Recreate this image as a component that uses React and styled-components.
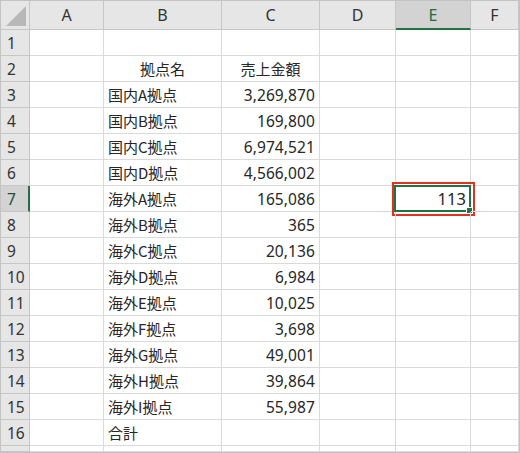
import React from "react";
import styled, { createGlobalStyle } from "styled-components";

const GlobalStyle = createGlobalStyle`
  html, body {
    margin: 0;
    padding: 0;
    background: #ffffff;
  }
`;

const Sheet = styled.div`
  position: relative;
  width: 520px;
  height: 453px;
  box-sizing: border-box;
  border: 1px solid #c3c3c3;
  overflow: hidden;
  display: grid;
  grid-template-columns: 29px 74px 118px 98px 76px 75px 1fr;
  grid-template-rows: 29px repeat(16, 26px) 1fr;
  font-family: "Noto Sans CJK JP", "Noto Sans", sans-serif;
  color: #262626;
  background: #ffffff;
`;

const Corner = styled.div`
  position: relative;
  background: #e6e6e6;
  border-right: 1px solid #c6c6c6;
  border-bottom: 1px solid #c6c6c6;
  box-sizing: border-box;
  &::after {
    content: "";
    position: absolute;
    right: 3px;
    bottom: 3px;
    width: 0;
    height: 0;
    border-left: 20px solid transparent;
    border-bottom: 20px solid #b8b8b8;
  }
`;

const ColHead = styled.div`
  display: flex;
  align-items: center;
  justify-content: center;
  box-sizing: border-box;
  background: ${(p) => (p.$active ? "#d3d3d3" : "#e6e6e6")};
  border-right: 1px solid #c6c6c6;
  border-bottom: ${(p) => (p.$active ? "2px solid #217346" : "1px solid #c6c6c6")};
  color: ${(p) => (p.$active ? "#1e6b40" : "#333")};
  font-family: "Noto Sans", "Liberation Sans", sans-serif;
  font-size: 16px;
  padding-top: ${(p) => (p.$active ? "1px" : "0")};
`;

const RowHead = styled.div`
  display: flex;
  align-items: center;
  padding-left: 6px;
  box-sizing: border-box;
  background: ${(p) => (p.$active ? "#d3d3d3" : "#e6e6e6")};
  border-right: ${(p) => (p.$active ? "2px solid #217346" : "1px solid #c6c6c6")};
  border-bottom: 1px solid #c6c6c6;
  color: ${(p) => (p.$active ? "#1e4f33" : "#333")};
  font-family: "Noto Sans", "Liberation Sans", sans-serif;
  font-size: 15.5px;
`;

const Cell = styled.div`
  position: relative;
  display: flex;
  align-items: center;
  justify-content: ${(p) =>
    p.$align === "right" ? "flex-end" : p.$align === "center" ? "center" : "flex-start"};
  padding: 0 4px;
  box-sizing: border-box;
  border-right: 1px solid #dadada;
  border-bottom: 1px solid #dadada;
  font-size: 15px;
  white-space: nowrap;
  overflow: visible;
`;

const Num = styled.span`
  font-family: "Noto Sans", "Liberation Sans", sans-serif;
  font-size: ${(p) => (p.$big ? "16.5px" : "15.5px")};
  letter-spacing: 0.1px;
`;

const Selected = styled.div`
  position: absolute;
  left: -2px;
  top: -1px;
  right: -1px;
  bottom: -1px;
  border: 2px solid #217346;
  box-sizing: border-box;
  display: flex;
  align-items: center;
  justify-content: flex-end;
  padding-right: 3px;
  &::after {
    content: "";
    position: absolute;
    right: -4px;
    bottom: -4px;
    width: 5px;
    height: 5px;
    background: #217346;
    border: 1px solid #ffffff;
  }
`;

const Highlight = styled.div`
  position: absolute;
  left: -4px;
  top: -4px;
  right: -5px;
  bottom: -5px;
  border: 2px solid #e2321f;
  pointer-events: none;
`;

const cols = ["A", "B", "C", "D", "E", "F"];

const data = [
  null,
  ["拠点名", ""],
  ["国内A拠点", "3,269,870"],
  ["国内B拠点", "169,800"],
  ["国内C拠点", "6,974,521"],
  ["国内D拠点", "4,566,002"],
  ["海外A拠点", "165,086"],
  ["海外B拠点", "365"],
  ["海外C拠点", "20,136"],
  ["海外D拠点", "6,984"],
  ["海外E拠点", "10,025"],
  ["海外F拠点", "3,698"],
  ["海外G拠点", "49,001"],
  ["海外H拠点", "39,864"],
  ["海外I拠点", "55,987"],
  ["合計", ""],
];

const App = () => {
  return (
    <>
      <GlobalStyle />
      <Sheet>
        <Corner />
        {cols.map((c) => (
          <ColHead key={c} $active={c === "E"}>
            {c}
          </ColHead>
        ))}
        {data.map((row, i) => {
          const n = i + 1;
          const isHeader = n === 2;
          return (
            <React.Fragment key={n}>
              <RowHead $active={n === 7}>{n}</RowHead>
              <Cell />
              <Cell $align={isHeader ? "center" : "left"}>{row ? row[0] : ""}</Cell>
              <Cell $align={isHeader ? "center" : "right"}>
                {isHeader ? "売上金額" : row ? <Num>{row[1]}</Num> : ""}
              </Cell>
              <Cell />
              <Cell>
                {n === 7 && (
                  <>
                    <Highlight />
                    <Selected>
                      <Num $big>113</Num>
                    </Selected>
                  </>
                )}
              </Cell>
              <Cell />
            </React.Fragment>
          );
        })}
        <RowHead />
        <Cell />
        <Cell />
        <Cell />
        <Cell />
        <Cell />
        <Cell />
      </Sheet>
    </>
  );
};

export default App;
